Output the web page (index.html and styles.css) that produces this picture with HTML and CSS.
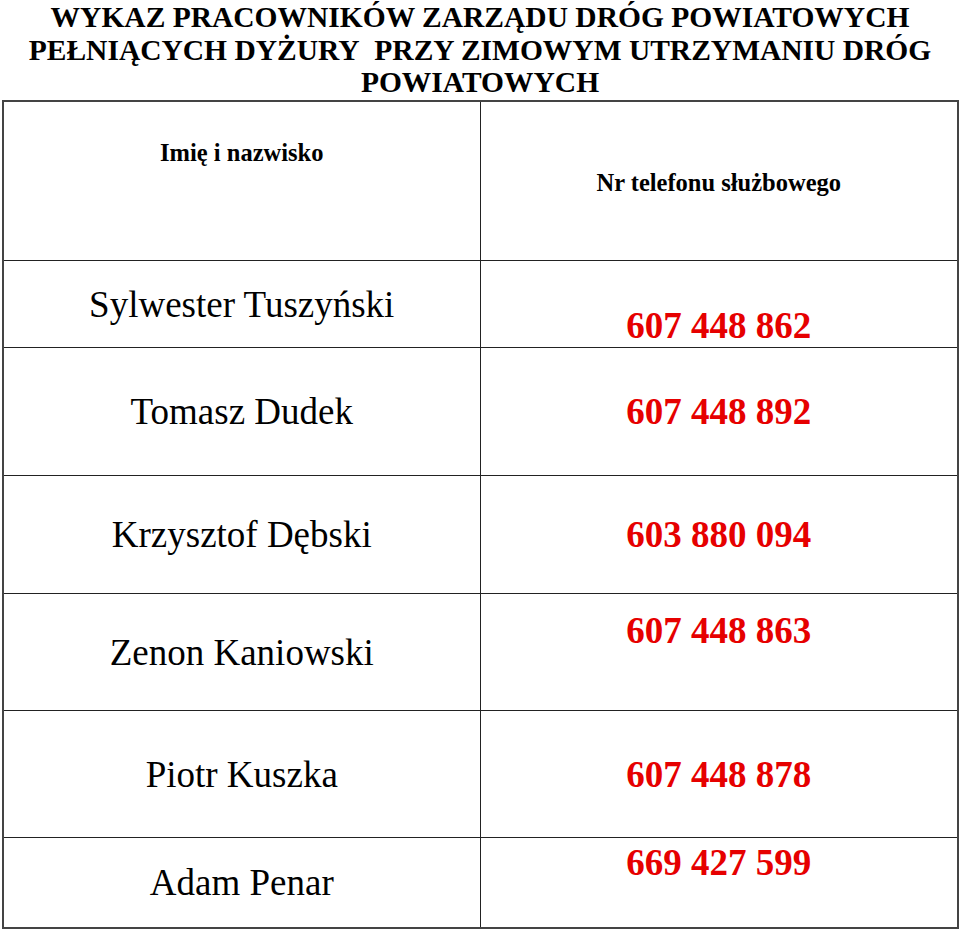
FILE: index.html
```html
<!DOCTYPE html>
<html lang="pl">
<head>
<meta charset="utf-8">
<title>Wykaz pracowników</title>
<link rel="stylesheet" href="styles.css">
</head>
<body>
<div class="page">
  <h1 class="title">WYKAZ PRACOWNIKÓW ZARZĄDU DRÓG POWIATOWYCH<br>PEŁNIĄCYCH DYŻURY&nbsp; PRZY ZIMOWYM UTRZYMANIU DRÓG<br>POWIATOWYCH</h1>
  <table class="list">
    <colgroup><col class="c-name"><col class="c-phone"></colgroup>
    <tr class="r-head">
      <th class="h-name">Imię i nazwisko</th>
      <th class="h-phone">Nr telefonu służbowego</th>
    </tr>
    <tr class="r1">
      <td class="name">Sylwester Tuszyński</td>
      <td class="phone bottom">607 448 862</td>
    </tr>
    <tr class="r2">
      <td class="name">Tomasz Dudek</td>
      <td class="phone">607 448 892</td>
    </tr>
    <tr class="r3">
      <td class="name">Krzysztof Dębski</td>
      <td class="phone">603 880 094</td>
    </tr>
    <tr class="r4">
      <td class="name">Zenon Kaniowski</td>
      <td class="phone top-a">607 448 863</td>
    </tr>
    <tr class="r5">
      <td class="name">Piotr Kuszka</td>
      <td class="phone">607 448 878</td>
    </tr>
    <tr class="r6">
      <td class="name">Adam Penar</td>
      <td class="phone top-b">669 427 599</td>
    </tr>
  </table>
</div>
</body>
</html>
```
FILE: styles.css
```css
html, body {
  margin: 0;
  padding: 0;
  background: #ffffff;
}
body {
  font-family: "Liberation Serif", "Times New Roman", serif;
  color: #000;
}
.page {
  width: 960px;
}
.title {
  margin: 0;
  padding-top: 1px;
  font-size: 29.5px;
  line-height: 32.5px;
  font-weight: bold;
  text-align: center;
}
.list {
  margin: 1px 0 0 2px;
  width: 955px;
  border-collapse: collapse;
  table-layout: fixed;
  border: 2px solid #444;
}
.c-name { width: 477px; }
.c-phone { width: 478px; }
.list th, .list td {
  border: 1px solid #222;
  padding: 0;
  text-align: center;
  vertical-align: middle;
}
.list th {
  font-size: 24.5px;
  font-weight: bold;
  line-height: normal;
}
.list .h-name {
  vertical-align: top;
  padding-top: 37px;
}
.list .h-phone {
  padding-top: 4px;
}
.list td {
  font-size: 37px;
  line-height: normal;
}
.phone {
  color: #e60000;
  font-weight: bold;
}
.list .phone.bottom { vertical-align: bottom; }
.list .phone.top-a { vertical-align: top; padding-top: 15px; }
.list .phone.top-b { vertical-align: top; padding-top: 3px; }
.r-head { height: 160px; }
.r1 { height: 87px; }
.r2 { height: 128px; }
.r3 { height: 118px; }
.r4 { height: 117px; }
.r5 { height: 127px; }
.r6 { height: 90px; }
```
